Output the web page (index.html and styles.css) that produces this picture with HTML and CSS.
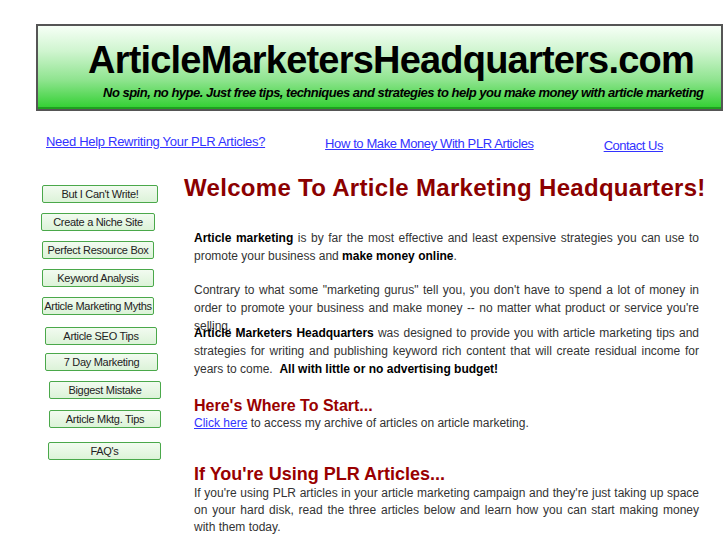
FILE: index.html
```html
<!DOCTYPE html>
<html>
<head>
<meta charset="utf-8">
<link rel="stylesheet" href="styles.css">
</head>
<body>
<div class="banner">
  <div class="site-title">ArticleMarketersHeadquarters.com</div>
  <div class="tagline">No spin, no hype. Just free tips, techniques and strategies to help you make money with article marketing</div>
</div>
<div class="toplinks">
  <a href="#" class="tl tl1">Need Help Rewriting Your PLR Articles?</a>
  <a href="#" class="tl tl2">How to Make Money With PLR Articles</a>
  <a href="#" class="tl tl3">Contact Us</a>
</div>
<div class="layout">
  <nav class="sidebar">
    <a href="#" class="btn b1">But I Can't Write!</a>
    <a href="#" class="btn b2">Create a Niche Site</a>
    <a href="#" class="btn b3">Perfect Resource Box</a>
    <a href="#" class="btn b4">Keyword Analysis</a>
    <a href="#" class="btn b5">Article Marketing Myths</a>
    <a href="#" class="btn b6">Article SEO Tips</a>
    <a href="#" class="btn b7">7 Day Marketing</a>
    <a href="#" class="btn b8">Biggest Mistake</a>
    <a href="#" class="btn b9">Article Mktg. Tips</a>
    <a href="#" class="btn b10">FAQ's</a>
  </nav>
  <main class="content">
    <h1 class="welcome">Welcome To Article Marketing Headquarters!</h1>
    <div class="body">
      <p class="para p1"><b>Article marketing</b> is by far the most effective and least expensive strategies you can use to promote your business and <b>make money online</b>.</p>
      <p class="para p2">Contrary to what some "marketing gurus" tell you, you don't have to spend a lot of money in order to promote your business and make money -- no matter what product or service you're selling.</p>
      <p class="para p3"><b>Article Marketers Headquarters</b> was designed to provide you with article marketing tips and strategies for writing and publishing keyword rich content that will create residual income for years to come.&nbsp; <b>All with little or no advertising budget!</b></p>
      <h2 class="sub sub1">Here's Where To Start...</h2>
      <p class="para p4"><a href="#" class="inline-link">Click here</a> to access my archive of articles on article marketing.</p>
      <h2 class="sub sub2">If You're Using PLR Articles...</h2>
      <p class="para p5">If you're using PLR articles in your article marketing campaign and they're just taking up space on your hard disk, read the three articles below and learn how you can start making money with them today.</p>
    </div>
  </main>
</div>
</body>
</html>
```

FILE: styles.css
```css
html, body {
  margin: 0;
  padding: 0;
  background: #fff;
}
body {
  font-family: "Liberation Sans", Arial, sans-serif;
  color: #333;
  width: 727px;
  overflow: hidden;
}
.banner {
  margin: 24px 0 0 36px;
  width: 683px;
  height: 83px;
  border: 2px solid #555;
  background: linear-gradient(to bottom, #f6fff6 0%, #d0f5d0 30%, #8fe48f 65%, #2fcf2f 100%);
  box-shadow: inset 0 -2px 0 #1f9f1f;
  box-sizing: content-box;
}
.site-title {
  font-weight: bold;
  font-size: 38px;
  color: #000;
  letter-spacing: -0.8px;
  padding: 15px 0 0 50px;
  line-height: 38px;
  white-space: nowrap;
}
.tagline {
  font-weight: bold;
  font-style: italic;
  font-size: 13px;
  color: #000;
  padding: 6px 0 0 65px;
  white-space: nowrap;
  letter-spacing: -0.5px;
}
.toplinks {
  display: flex;
  align-items: flex-start;
  height: 60px;
  padding-left: 46px;
}
.tl {
  font-size: 13px;
  color: #3333ff;
  text-decoration: underline;
  letter-spacing: -0.3px;
  white-space: nowrap;
}
.tl1 { margin-top: 23px; }
.tl2 { margin-top: 25px; margin-left: 60px; letter-spacing: -0.4px; }
.tl3 { margin-top: 27px; margin-left: 70px; letter-spacing: -0.5px; }
.layout {
  display: flex;
  align-items: flex-start;
}
.sidebar {
  width: 184px;
  flex: none;
  display: flex;
  flex-direction: column;
  align-items: flex-start;
  padding-top: 14px;
}
.btn {
  display: block;
  box-sizing: border-box;
  width: 116px;
  height: 18px;
  line-height: 16px;
  border: 1px solid #4aa84a;
  border-radius: 2px;
  background: linear-gradient(to bottom, #f2fbf0, #dcf3d8);
  color: #222;
  font-size: 11px;
  letter-spacing: -0.3px;
  text-align: center;
  text-decoration: none;
  white-space: nowrap;
  margin-bottom: 10px;
}
.b1 { margin-left: 42px; }
.b2 { margin-left: 41px; width: 114px; }
.b3 { margin-left: 42px; width: 112px; }
.b4 { margin-left: 42px; width: 112px; }
.b5 { margin-left: 42px; width: 112px; margin-bottom: 12px; }
.b6 { margin-left: 45px; width: 112px; margin-bottom: 8px; }
.b7 { margin-left: 45px; width: 113px; }
.b8 { margin-left: 49px; width: 112px; margin-bottom: 11px; }
.b9 { margin-left: 49px; width: 112px; margin-bottom: 14px; }
.b10 { margin-left: 48px; width: 113px; }
.content {
  flex: none;
  width: 530px;
  padding-top: 3px;
}
.welcome {
  margin: 0;
  font-size: 24px;
  line-height: 28px;
  color: #8b0000;
  font-weight: bold;
  white-space: nowrap;
  letter-spacing: 0.3px;
}
.body {
  margin-left: 10px;
  width: 505px;
}
.para {
  margin: 0;
  font-size: 12px;
  line-height: 18px;
  text-align: justify;
}
.para b { color: #000; }
.p1 { margin-top: 27px; }
.p2 { margin-top: 16px; height: 43px; }
.sub {
  margin: 0;
  color: #990000;
  font-weight: bold;
}
.sub1 { font-size: 16px; line-height: 20px; margin-top: 18px; }
.sub2 { font-size: 18px; line-height: 22px; margin-top: 32px; }
.p4 { line-height: 15px; }
.p5 { line-height: 17px; }
.inline-link { color: #3333ff; }
```
